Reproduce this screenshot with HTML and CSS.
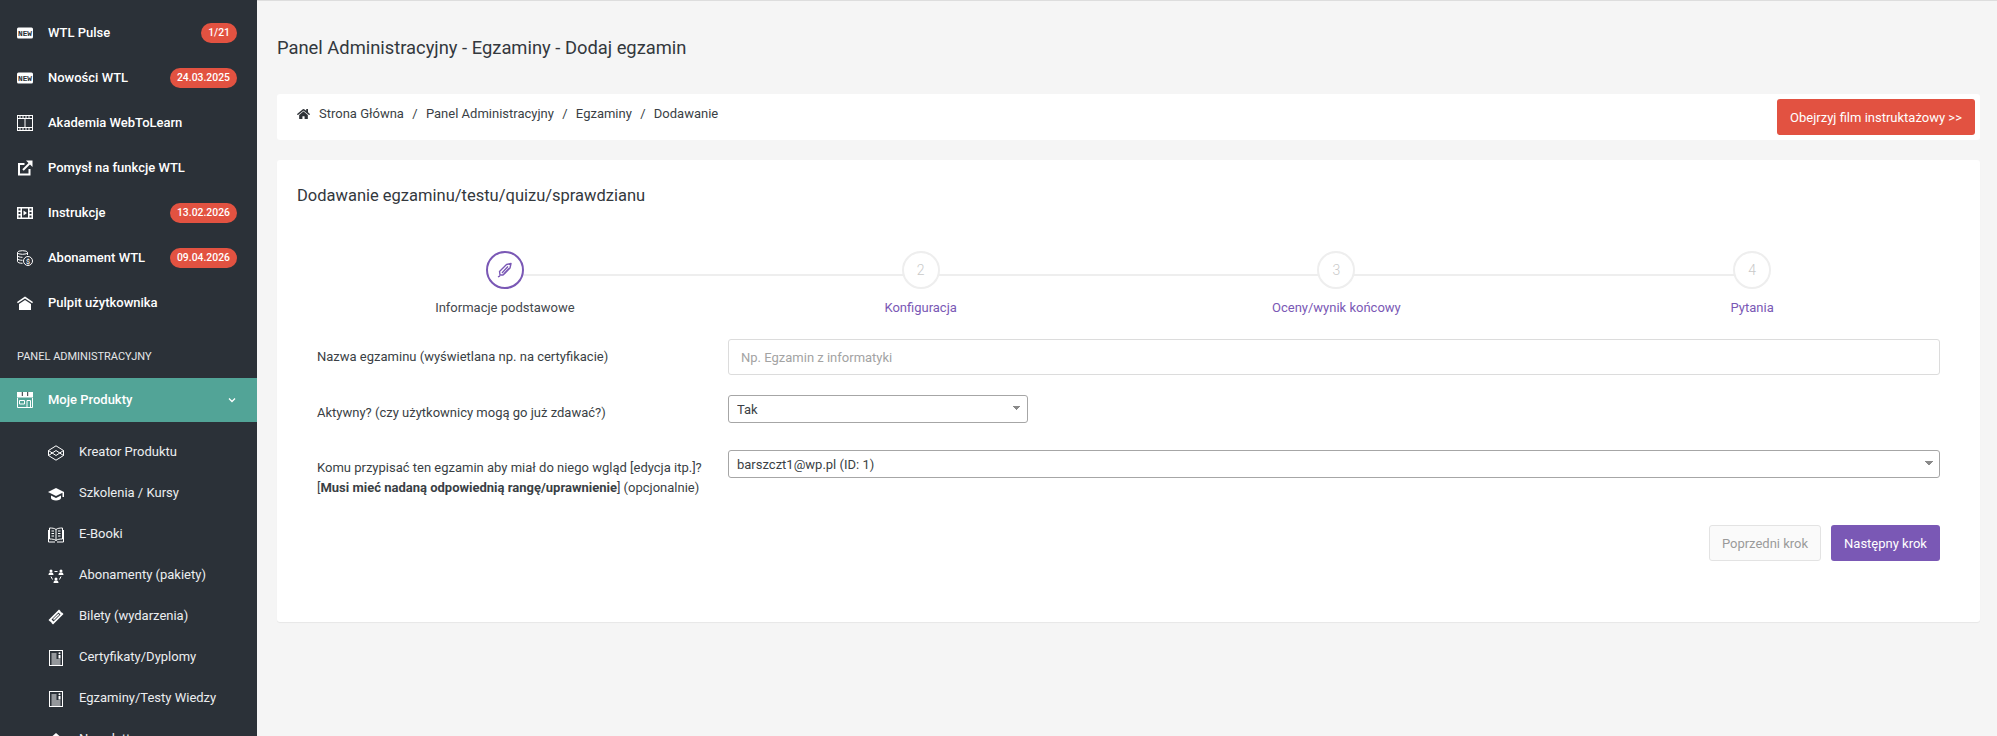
FILE: index.html
```html
<!DOCTYPE html>
<html lang="pl">
<head>
<meta charset="utf-8">
<title>Panel Administracyjny - Egzaminy - Dodaj egzamin</title>
<link rel="stylesheet" href="styles.css">
</head>
<body>
<div class="app">
  <aside class="sidebar">
    <ul class="menu">
      <li class="menu-item">
        <svg class="icon" viewBox="0 0 16 16"><rect x="0" y="2.500" width="16" height="11" rx="1.500" fill="#fff"/><text x="1" y="10.800" class="new-text" textLength="14" lengthAdjust="spacingAndGlyphs">NEW</text></svg>
        <span class="menu-label">WTL Pulse</span><span class="badge">1/21</span>
      </li>
      <li class="menu-item">
        <svg class="icon" viewBox="0 0 16 16"><rect x="0" y="2.500" width="16" height="11" rx="1.500" fill="#fff"/><text x="1" y="10.800" class="new-text" textLength="14" lengthAdjust="spacingAndGlyphs">NEW</text></svg>
        <span class="menu-label">Nowości WTL</span><span class="badge">24.03.2025</span>
      </li>
      <li class="menu-item">
        <svg class="icon" viewBox="0 0 16 16" fill="none" stroke="#fff"><rect x=".5" y=".5" width="15" height="15"/><path d="M0 3.500h16M0 12.500h16M8 3.500v9M3 .5v3M6 .5v3M9 .5v3M12 .5v3M3 12.500v3M6 12.500v3M9 12.500v3M12 12.500v3"/></svg>
        <span class="menu-label">Akademia WebToLearn</span>
      </li>
      <li class="menu-item">
        <svg class="icon" viewBox="0 0 16 16" fill="none" stroke="#fff" stroke-width="2"><path d="M7.500 4H2v10.500h10.500V9"/><path d="M6 10l6.500-6.500"/><path d="M9 .5h6.500V7z" fill="#fff" stroke="none"/></svg>
        <span class="menu-label">Pomysł na funkcje WTL</span>
      </li>
      <li class="menu-item">
        <svg class="icon" viewBox="0 0 16 16"><path fill="#fff" fill-rule="evenodd" d="M0 2h16v12H0zM1.500 3.500v2h2v-2zm0 3.500v2h2V7zm0 3.500v2h2v-2zM12.500 3.500v2h2v-2zm0 3.500v2h2V7zm0 3.500v2h2v-2zM5 3.500v9h6v-9z"/><path fill="#fff" d="M6.500 5.500l3.500 2.500-3.500 2.500z"/></svg>
        <span class="menu-label">Instrukcje</span><span class="badge">13.02.2026</span>
      </li>
      <li class="menu-item">
        <svg class="icon" viewBox="0 0 16 16" fill="none" stroke="#fff"><ellipse cx="5.500" cy="2.500" rx="5" ry="1.800"/><path d="M.5 2.500v9c0 1 2 1.800 5 1.800M.5 5.500c0 1 2 1.800 5 1.800M.5 8.500c0 1 2 1.800 5 1.800M10.500 2.500v2.500"/><circle cx="11" cy="11" r="4.500"/><text x="11" y="13.500" class="dollar-text">$</text></svg>
        <span class="menu-label">Abonament WTL</span><span class="badge">09.04.2026</span>
      </li>
      <li class="menu-item">
        <svg class="icon" viewBox="0 0 16 16"><path fill="#fff" d="M8 1.500L0 7l.8 1.200L8 3.400l7.200 4.800L16 7z"/><path fill="#fff" d="M8 5L2 9v6h12V9z"/></svg>
        <span class="menu-label">Pulpit użytkownika</span>
      </li>
    </ul>
    <div class="section-label">PANEL ADMINISTRACYJNY</div>
    <div class="menu-item active">
      <svg class="icon" viewBox="0 0 16 16" fill="none" stroke="#fff"><path fill="#fff" stroke="none" d="M0 0h16v5.500H0z"/><path stroke="#2b3138" d="M5.300 0v4M10.700 0v4"/><path d="M.5 6v9.500h15V6M2.500 8.500h5v3.500h-5zM10 15.500V8.500h3.500v7"/></svg>
      <span class="menu-label">Moje Produkty</span>
      <svg class="chevron" viewBox="0 0 10 10" fill="none" stroke="#fff" stroke-width="1.300"><path d="M2 3.500l3 3 3-3"/></svg>
    </div>
    <ul class="submenu">
      <li class="sub-item">
        <svg class="icon" viewBox="0 0 16 16" fill="none" stroke="#fff"><path d="M8 .8L15.500 5.500v5L8 15.200.5 10.500v-5z"/><path d="M.5 5.500L8 10.500l7.500-5M.5 10.500L8 5.500l7.500 5"/></svg>
        <span>Kreator Produktu</span>
      </li>
      <li class="sub-item">
        <svg class="icon" viewBox="0 0 16 16"><path fill="#fff" d="M8 2L0 6l8 4 6.500-3.200V11H16V6z"/><path fill="#fff" d="M3 9.500V12c0 1.300 2.300 2.500 5 2.500s5-1.200 5-2.500V9.500l-5 2.500z"/></svg>
        <span>Szkolenia / Kursy</span>
      </li>
      <li class="sub-item">
        <svg class="icon" viewBox="0 0 16 16" fill="none" stroke="#fff"><path d="M8 2.500C6.500 1.200 4 1 1.500 1v11c2.500 0 5 .2 6.500 1.500 1.500-1.300 4-1.500 6.500-1.500V1C12 1 9.500 1.200 8 2.500zM8 2.500v11M.5 3v12H7M15.500 3v12H9M3.500 4H6M3.500 6.500H6M3.500 9H6M10 4h2.500M10 6.500h2.500M10 9h2.500"/></svg>
        <span>E-Booki</span>
      </li>
      <li class="sub-item">
        <svg class="icon" viewBox="0 0 16 16" fill="#fff"><circle cx="3" cy="3" r="1.500"/><circle cx="13" cy="3" r="1.500"/><circle cx="8" cy="11" r="1.500"/><path d="M.5 7c0-2 1-2.500 2.500-2.500S5.500 5 5.500 7zM10.500 7c0-2 1-2.500 2.500-2.500S15.500 5 15.500 7zM5.500 15c0-2 1-2.500 2.500-2.500s2.500.5 2.500 2.500z"/><path fill="none" stroke="#fff" d="M6.500 3.500h3M3 8.500l1.500 3M13 8.500l-1.500 3"/></svg>
        <span>Abonamenty (pakiety)</span>
      </li>
      <li class="sub-item">
        <svg class="icon" viewBox="0 0 16 16"><path fill="#fff" fill-rule="evenodd" d="M11 .5l1.500 1.500a1.500 1.500 0 0 0 1.500 1.500l1.500 1.500L5 15.500 3.500 14a1.500 1.500 0 0 0-1.500-1.500L.5 11zM10.500 3.500L3.500 10.500l2 2 7-7z"/><path fill="#fff" d="M10.300 4.700l1 1L6 11l-1-1z"/></svg>
        <span>Bilety (wydarzenia)</span>
      </li>
      <li class="sub-item">
        <svg class="icon" viewBox="0 0 16 16" fill="none" stroke="#fff"><rect x="1.500" y=".5" width="13" height="15"/><path d="M3.500 4h5M3.500 6h5M3.500 8h5M3.500 10h9M3.500 12h9M3.500 14h9"/><path stroke-width="2" d="M11.500 5v3.500"/><circle cx="11.500" cy="3.300" r="1" fill="#fff" stroke="none"/></svg>
        <span>Certyfikaty/Dyplomy</span>
      </li>
      <li class="sub-item">
        <svg class="icon" viewBox="0 0 16 16" fill="none" stroke="#fff"><rect x="1.500" y=".5" width="13" height="15"/><path d="M3.500 4h5M3.500 6h5M3.500 8h5M3.500 10h9M3.500 12h9M3.500 14h9"/><path stroke-width="2" d="M11.500 5v3.500"/><circle cx="11.500" cy="3.300" r="1" fill="#fff" stroke="none"/></svg>
        <span>Egzaminy/Testy Wiedzy</span>
      </li>
      <li class="sub-item">
        <svg class="icon" viewBox="0 0 16 16"><path fill="#fff" d="M8 1l7 6v8H1V7z"/></svg>
        <span>Newsletter</span>
      </li>
    </ul>
  </aside>

  <main class="main">
    <h1 class="page-title">Panel Administracyjny - Egzaminy - Dodaj egzamin</h1>

    <nav class="breadcrumb-card">
      <div class="breadcrumb">
        <svg class="home-icon" viewBox="0 0 576 512"><path fill="#2f3338" d="M280.400 148.300L96 300.100V464a16 16 0 0 0 16 16l112-.3a16 16 0 0 0 15.900-16V368a16 16 0 0 1 16-16h64a16 16 0 0 1 16 16v95.600a16 16 0 0 0 16 16L464 480a16 16 0 0 0 16-16V300L295.700 148.300a12.200 12.200 0 0 0-15.300 0zM571.600 251.500L488 182.600V44a12 12 0 0 0-12-12h-56a12 12 0 0 0-12 12v72.600L318.500 43a48 48 0 0 0-61 0L4.300 251.500a12 12 0 0 0-1.600 16.900l25.500 31a12 12 0 0 0 16.900 1.600l235.200-193.700a12.200 12.200 0 0 1 15.300 0L530.900 301a12 12 0 0 0 16.900-1.600l25.500-31a12 12 0 0 0-1.700-16.900z"/></svg>
        <span>Strona Główna</span><span class="sep">/</span>
        <span>Panel Administracyjny</span><span class="sep">/</span>
        <span>Egzaminy</span><span class="sep">/</span>
        <span>Dodawanie</span>
      </div>
      <a class="btn btn-red">Obejrzyj film instruktażowy &gt;&gt;</a>
    </nav>

    <section class="card">
      <h2 class="card-title">Dodawanie egzaminu/testu/quizu/sprawdzianu</h2>

      <div class="stepper">
        <div class="step current">
          <span class="step-circle">
            <svg class="pen" viewBox="0 0 16 16" fill="none" stroke="#7a58b5" stroke-width="1.400"><path d="M1 15l2-1.200M3 13l-.5-3.500L9.500 2.500 14 1.500 13 6l-7 7z" stroke-linejoin="round"/><path d="M5 11l6-6.500M7 12l5-5.500"/></svg>
          </span>
          <span class="step-label">Informacje podstawowe</span>
        </div>
        <div class="step">
          <span class="step-circle">2</span>
          <span class="step-label">Konfiguracja</span>
        </div>
        <div class="step">
          <span class="step-circle">3</span>
          <span class="step-label">Oceny/wynik końcowy</span>
        </div>
        <div class="step">
          <span class="step-circle">4</span>
          <span class="step-label">Pytania</span>
        </div>
      </div>

      <form class="form">
        <div class="form-row row-name">
          <label class="form-label">Nazwa egzaminu (wyświetlana np. na certyfikacie)</label>
          <input class="input" type="text" placeholder="Np. Egzamin z informatyki">
        </div>
        <div class="form-row row-active">
          <label class="form-label">Aktywny? (czy użytkownicy mogą go już zdawać?)</label>
          <select class="select select-short"><option>Tak</option></select>
        </div>
        <div class="form-row row-owner">
          <label class="form-label">Komu przypisać ten egzamin aby miał do niego wgląd [edycja itp.]?<br>[<b>Musi mieć nadaną odpowiednią rangę/uprawnienie</b>] (opcjonalnie)</label>
          <select class="select"><option>barszczt1@wp.pl (ID: 1)</option></select>
        </div>
        <div class="form-actions">
          <a class="btn btn-light">Poprzedni krok</a>
          <a class="btn btn-purple">Następny krok</a>
        </div>
      </form>
    </section>
  </main>
</div>
</body>
</html>
```
FILE: styles.css
```css
* { box-sizing: border-box; }
html, body { margin: 0; height: 100%; overflow: hidden; }
body { font-family: Roboto, "Liberation Sans", sans-serif; font-size: 13px; color: #3a3f45; background: #f5f5f5; }
ul { list-style: none; margin: 0; padding: 0; }

.app { display: flex; height: 736px; overflow: hidden; }

.sidebar { flex: 0 0 257px; height: 736px; overflow: hidden; background: #2b3138; color: #fff; padding-top: 10px; }
.menu-item { display: flex; align-items: center; height: 45px; padding: 0 20px 0 17px; font-weight: 500; color: #fff; }
.icon { flex: 0 0 16px; width: 16px; height: 16px; margin-right: 15px; }
.menu-label { flex: 1; }
.new-text { font-family: "Liberation Mono", monospace; font-size: 8px; font-weight: 700; fill: #2b3138; }
.dollar-text { font-family: Roboto, sans-serif; font-size: 7px; fill: #fff; stroke: none; text-anchor: middle; }
.badge { display: block; height: 20px; line-height: 20px; padding: 0 7px; border-radius: 10px; background: #e25241; color: #fff; font-size: 10.400px; font-weight: 500; white-space: nowrap; }
.section-label { margin-top: 22px; height: 20px; line-height: 20px; padding-left: 17px; font-size: 11px; color: #e4e6e8; }
.menu-item.active { margin-top: 11px; height: 44px; background: #52a497; }
.menu-item.active .menu-label { margin-top: -2px; }
.chevron { width: 10px; height: 10px; margin-right: 0; }
.submenu { padding-top: 9px; }
.sub-item { display: flex; align-items: center; height: 41px; padding-left: 48px; color: #eceef0; }
.sub-item .icon { margin-right: 15px; margin-top: 2px; }

.main { flex: 1; min-width: 0; height: 736px; border-top: 1px solid #ddd; padding: 0 17px 0 20px; }
.page-title { margin: 33px 0 0; height: 28px; line-height: 28px; font-size: 18.350px; font-weight: 400; color: #33383d; }

.breadcrumb-card { display: flex; justify-content: space-between; align-items: flex-start; margin-top: 32px; height: 46px; padding: 5px; background: #fff; border-radius: 3px; }
.breadcrumb { display: flex; align-items: center; height: 29px; padding-left: 15px; color: #3a3f45; }
.home-icon { width: 13px; height: 12px; margin-right: 9px; }
.sep { margin: 0 8.300px; }

.btn { display: flex; align-items: center; justify-content: center; height: 36px; border-radius: 3px; font-size: 13px; }
.btn-red { width: 198px; background: #e25241; color: #fff; }

.card { margin-top: 20px; height: 462px; padding: 26px 20px 0; background: #fff; border-radius: 3px; box-shadow: 0 1px 1px rgba(0, 0, 0, 0.06); }
.card-title { margin: 0; height: 20px; line-height: 20px; font-size: 16.500px; font-weight: 400; color: #33383d; }

.stepper { display: grid; grid-template-columns: repeat(4, 1fr); margin-top: 45px; }
.step { position: relative; display: flex; flex-direction: column; align-items: center; }
.step:not(:last-child)::after { content: ""; position: absolute; left: 50%; width: 100%; top: 23px; height: 2px; background: #eeeeee; }
.step-circle { position: relative; z-index: 1; display: flex; align-items: center; justify-content: center; width: 38px; height: 38px; border: 2px solid #eeeeee; border-radius: 50%; background: #fff; color: #c9c9c9; font-size: 14px; font-weight: 300; }
.step.current .step-circle { border-color: #7a58b5; }
.pen { width: 16px; height: 16px; }
.step-label { margin-top: 9px; height: 20px; line-height: 20px; color: #7a58b5; }
.step.current .step-label { color: #44484d; }

.form { margin-top: 21px; padding: 0 20px; }
.form-row { display: grid; grid-template-columns: 411px 1fr; align-items: start; }
.row-name { margin-bottom: 20px; }
.row-active, .row-owner { margin-bottom: 27px; }
.form-label { display: block; padding-top: 8px; line-height: 20px; color: #3a3f45; white-space: nowrap; }
.form-label b { font-weight: 700; }
.input { width: 100%; height: 36px; padding: 0 12px; border: 1px solid #dcdcdc; border-radius: 3px; font: 13px Roboto, sans-serif; color: #3a3f45; outline: none; }
.input::placeholder { color: #a3a3a3; opacity: 1; }
.select {
  appearance: none;
  width: 100%;
  height: 28px;
  padding: 0 24px 0 8px;
  border: 1px solid #a6a6a6;
  border-radius: 3px;
  font: 13px Roboto, sans-serif;
  color: #3a3f45;
  background-color: #fff;
  background-image: linear-gradient(45deg, transparent 50%, #8a8a8a 50%), linear-gradient(-45deg, transparent 50%, #8a8a8a 50%);
  background-size: 4px 4px, 4px 4px;
  background-position: right 10px top 10px, right 6px top 10px;
  background-repeat: no-repeat;
}
.select-short { width: 300px; }
.form-actions { display: flex; justify-content: flex-end; gap: 10px; }
.btn-light { width: 112px; background: #fafafa; border: 1px solid #e3e3e3; color: #9a9a9a; }
.btn-purple { width: 109px; background: #7a58b5; color: #fff; }
```
